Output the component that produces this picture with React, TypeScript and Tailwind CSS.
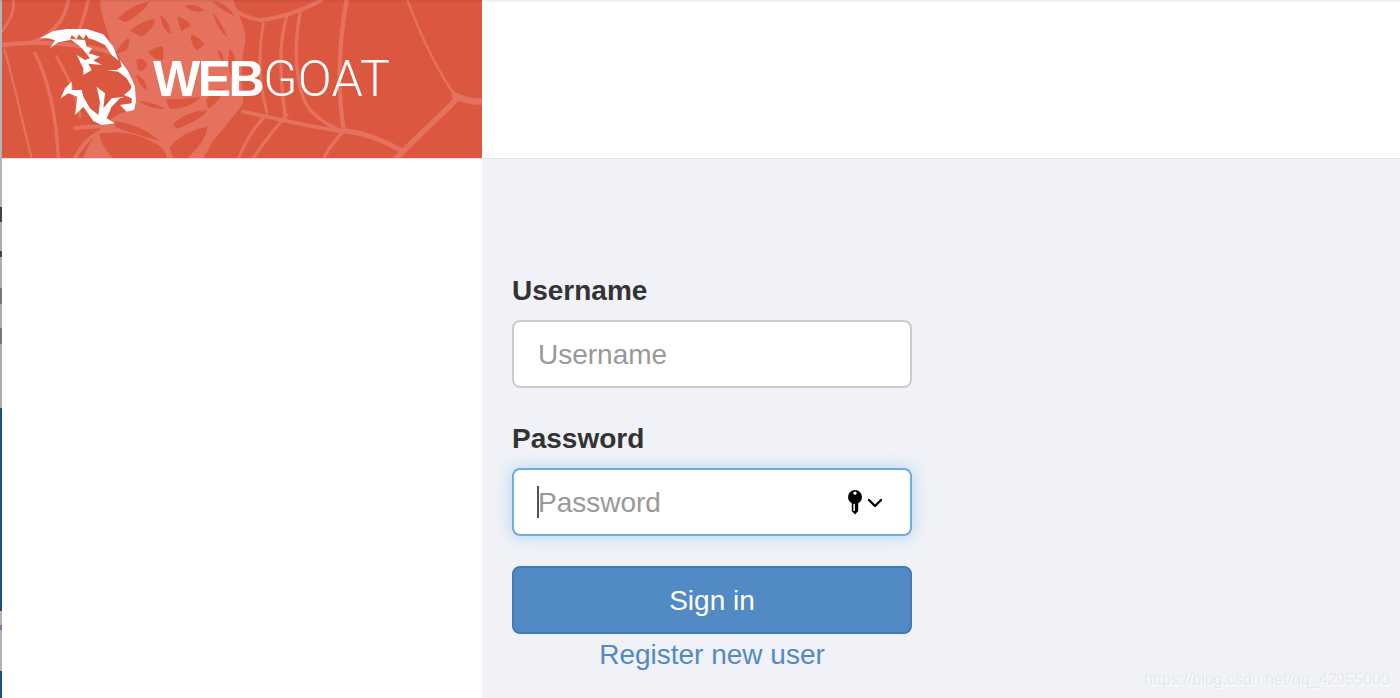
import { useState } from 'react';
import { ChevronDown } from 'lucide-react';

const sans = 'font-["Liberation_Sans",Arial,sans-serif]';

// all logo art is traced in 3x coordinates of the orange block
const CELLS = [
    'M355,55 Q395,15 445,8 Q420,45 375,65 Z',
    'M392,92 Q425,65 462,58 Q465,82 425,108 Z',
    'M482,48 Q505,60 512,100 Q490,92 482,48 Z',
    'M535,50 Q560,60 572,76 Q555,85 545,92 Q535,72 535,50 Z',
    'M555,18 Q590,12 610,30 Q585,42 555,18 Z',
    'M575,105 Q600,115 612,132 Q598,145 590,150 Q572,130 575,105 Z',
    'M446,156 Q465,142 486,140 Q492,160 488,178 Q462,180 446,156 Z',
    'M350,160 Q362,130 385,116 Q388,135 378,150 Z',
    'M640,40 Q670,80 680,110 Q655,90 640,40 Z',
    'M640,5 Q680,10 700,45 Q665,30 640,5 Z',
    'M655,150 Q670,160 668,185 Q655,170 655,150 Z',
    'M410,180 Q430,170 440,195 Q432,215 415,210 Z',
    'M410,225 Q435,235 440,270 Q418,255 410,225 Z',
    'M420,305 Q450,305 490,325 Q455,325 420,305 Z',
    'M500,300 Q550,300 600,292 Q570,325 510,325 Z',
    'M520,372 Q560,335 620,332 Q600,360 530,385 Z',
    'M510,442 Q550,395 620,382 Q620,420 560,474 H520 Z',
    'M300,402 Q400,385 480,440 Q495,455 500,474 H340 Q300,430 300,402 Z',
    'M345,365 Q420,375 475,420 Q420,405 345,380 Z',
    'M620,300 Q640,260 670,270 Q660,300 625,325 Z',
    'M690,150 Q715,170 700,240 Q680,200 690,150 Z',
    'M635,430 Q680,370 735,345 Q730,400 670,474 H625 Z',
];

const THREADS: [string, number][] = [
    // left side
    ['M6,135 C100,122 250,128 340,160', 13],
    ['M40,0 C45,40 25,65 8,92', 8],
    ['M205,0 C195,70 140,115 90,128', 11],
    ['M265,0 C250,60 240,90 225,120', 10],
    ['M14,150 C45,260 70,380 95,474', 7],
    ['M105,160 C150,250 170,370 175,474', 10],
    ['M170,170 C210,240 235,300 240,350', 9],
    ['M225,385 C330,370 420,380 500,474', 12],
    ['M225,474 C250,430 270,410 300,395', 12],
    // right side
    ['M965,0 C900,35 840,55 780,60 C750,55 720,45 700,25', 12],
    ['M1040,0 C1015,130 1012,280 1032,395', 13],
    ['M900,40 C880,140 885,270 930,330 C960,360 1000,385 1032,395', 10],
    ['M790,70 C775,150 775,240 800,335', 9],
    ['M860,50 C835,130 840,230 855,345', 10],
    ['M1032,392 C1090,398 1150,420 1205,452', 15],
    ['M730,335 C850,360 950,385 1032,395', 12],
    ['M1032,395 C1000,420 985,450 972,474', 10],
    ['M1222,0 C1260,100 1310,210 1365,285', 7],
    ['M1365,287 C1390,300 1420,305 1442,305', 20],
    ['M1372,295 C1320,350 1260,400 1190,474', 17],
    ['M860,345 C820,390 790,430 760,474', 10],
    ['M800,345 C760,380 735,430 715,474', 9],
];

function SpiderWeb() {
    return (
        <svg viewBox="6 0 1440 474" className="absolute inset-0 w-full h-full" fill="none" stroke="#e4725f">
            {THREADS.map(([d, w]) => (
                <path key={d} d={d} strokeWidth={w} strokeLinecap="round" />
            ))}
            {/* middle of the web: solid light shape with the gaps cut back in */}
            <path
                d="M300,0 H700 C720,60 745,100 735,130 C722,190 725,250 730,310 C700,350 640,420 610,474 H250 C270,420 320,340 400,330 C420,250 360,180 330,125 C320,80 300,40 300,0 Z"
                fill="#e4725f"
                stroke="none"
            />
            {CELLS.map((d) => (
                <path key={d} d={d} fill="#dc5740" stroke="#dc5740" strokeWidth="3" strokeLinejoin="round" />
            ))}
        </svg>
    );
}

function GoatLogo() {
    return (
        <svg viewBox="6 0 1440 474" className="absolute inset-0 w-full h-full blur-[0.4px]" fill="#fff">
            <g transform="translate(60 45)">
                {/* horn */}
                <path d="M60,70 L100,48 L140,42 L200,42 L250,58 L280,95 L296,137 L275,120 L255,90 L225,76 L205,70 L198,58 L190,72 L176,58 L170,72 L155,60 L150,75 L115,82 L90,100 L105,76 L85,70 Z" />
                {/* ridge and brow */}
                <path d="M150,72 L195,75 L200,95 L216,100 L206,115 L240,125 L220,136 L246,150 L205,146 L215,165 L190,180 L190,160 L170,120 L195,135 L210,130 L190,105 L175,90 Z" />
                {/* snout */}
                <path d="M260,165 L290,165 L305,155 L300,135 L325,170 L345,215 L348,260 L342,285 L320,290 L300,270 L335,265 L335,250 L312,240 L330,225 L335,215 L320,190 L295,170 Z" />
                {/* beard */}
                <path d="M155,200 L135,220 L122,250 L145,235 L172,245 L165,300 L190,275 L220,318 L245,330 L285,325 L260,310 L275,275 L300,250 L315,245 L275,250 L250,280 L255,235 L230,215 L240,260 L235,300 L210,280 L190,245 L185,225 L155,225 Z" />
            </g>
        </svg>
    );
}

function KeyIcon() {
    return (
        <svg viewBox="0 0 16 26" className="w-4 h-[26px]">
            <path d="M4.8,12 H11.2 V22 L8,25.5 L4.8,22 Z" fill="#000" />
            <rect x="6.4" y="13" width="1.5" height="9" fill="#fff" />
            <circle cx="8" cy="8" r="7" fill="#000" />
            <circle cx="8" cy="4.2" r="1.6" fill="#fff" />
        </svg>
    );
}

export default function App() {
    const [username, setUsername] = useState('');
    const [password, setPassword] = useState('');

    return (
        <div className={`relative flex w-[1400px] h-[698px] overflow-hidden bg-white ${sans}`}>
            {/* sliver of the window behind */}
            <div className="w-[2px] shrink-0 flex flex-col">
                <div className="h-[207px] bg-[#b0b6ba]" />
                <div className="h-[15px] bg-[#444444]" />
                <div className="h-[29px] bg-[#adadad]" />
                <div className="h-[6px] bg-[#444444]" />
                <div className="h-[31px] bg-[#adadad]" />
                <div className="h-[16px] bg-[#777777]" />
                <div className="h-[24px] bg-[#adadad]" />
                <div className="h-[16px] bg-[#777777]" />
                <div className="h-[64px] bg-[#adadad]" />
                <div className="h-[203px] bg-[#1c4f82]" />
                <div className="h-[14px] bg-[#b3b3b3]" />
                <div className="h-[5px] bg-[#7a76a8]" />
                <div className="h-[41px] bg-[#b3b3b3]" />
                <div className="flex-1 bg-[#1c4f82]" />
            </div>

            <div className="flex-1 flex flex-col">
                <header className="h-[159px] shrink-0 flex border-b border-[#e0e2e5] bg-white">
                    <div className="relative w-[480px] h-[158px] bg-[#dc5740] overflow-hidden">
                        <SpiderWeb />
                        <GoatLogo />
                        <div className="relative h-full flex items-center pl-[151px] text-[50px] leading-none text-white tracking-[-2.5px]">
                            <span className="font-bold">WEB</span>
                            <span className="font-['Roboto',sans-serif] font-light tracking-[0.4px] ml-[1px]">GOAT</span>
                        </div>
                    </div>
                </header>

                <div className="flex-1 flex">
                    <aside className="w-[480px] bg-white" />
                    <main className="flex-1 bg-[#f0f2f7] pl-[30px] pt-[112px]">
                        <form className="w-[400px] flex flex-col" onSubmit={(e) => e.preventDefault()}>
                            <label htmlFor="username" className="h-[40px] leading-[40px] mb-[9px] text-[28px] font-bold text-[#333333]">
                                Username
                            </label>
                            <input
                                id="username"
                                value={username}
                                onChange={(e) => setUsername(e.target.value)}
                                placeholder="Username"
                                className="h-[68px] mb-[31px] px-6 pt-[2px] rounded-[8px] border-2 border-[#cccccc] bg-white text-[28px] text-[#555555] placeholder:text-[#999999] outline-none"
                            />

                            <label htmlFor="password" className="h-[40px] leading-[40px] mb-[9px] text-[28px] font-bold text-[#333333]">
                                Password
                            </label>
                            <div className="relative h-[68px]">
                                <input
                                    id="password"
                                    type="password"
                                    value={password}
                                    onChange={(e) => setPassword(e.target.value)}
                                    placeholder="Password"
                                    className="w-full h-full px-6 pt-[2px] rounded-[8px] border-2 border-[#70a9e4] bg-white text-[28px] text-[#555555] placeholder:text-[#999999] outline-none shadow-[0_0_16px_rgba(102,175,233,0.45)]"
                                />
                                {/* text caret */}
                                <div className="absolute left-[25px] top-[18px] w-[2px] h-[32px] bg-[#555555]" />
                                <div className="absolute left-[335px] top-[21px] flex items-center">
                                    <KeyIcon />
                                    <ChevronDown size={24} strokeWidth={2.4} color="#000" className="mt-[1px]" />
                                </div>
                            </div>

                            <button
                                type="submit"
                                className="mt-[30px] h-[68px] pt-[2px] rounded-[8px] border-2 border-[#4279b6] bg-[#528ac5] text-[28px] text-white"
                            >
                                Sign in
                            </button>
                            <a href="#register" className="h-[42px] leading-[42px] text-center text-[28px] text-[#528ac5]">
                                Register new user
                            </a>
                        </form>
                    </main>
                </div>
            </div>

            {/* top edge shadow */}
            <div className="absolute top-0 left-0 right-0 h-[2px] bg-black/5" />
            {/* csdn watermark */}
            <span className="absolute right-[10px] top-[668px] text-[16px] leading-[24px] text-[#e6e8ee] [text-shadow:1px_1px_1px_#ffffff]">
                https://blog.csdn.net/qq_42955000
            </span>
        </div>
    );
}
